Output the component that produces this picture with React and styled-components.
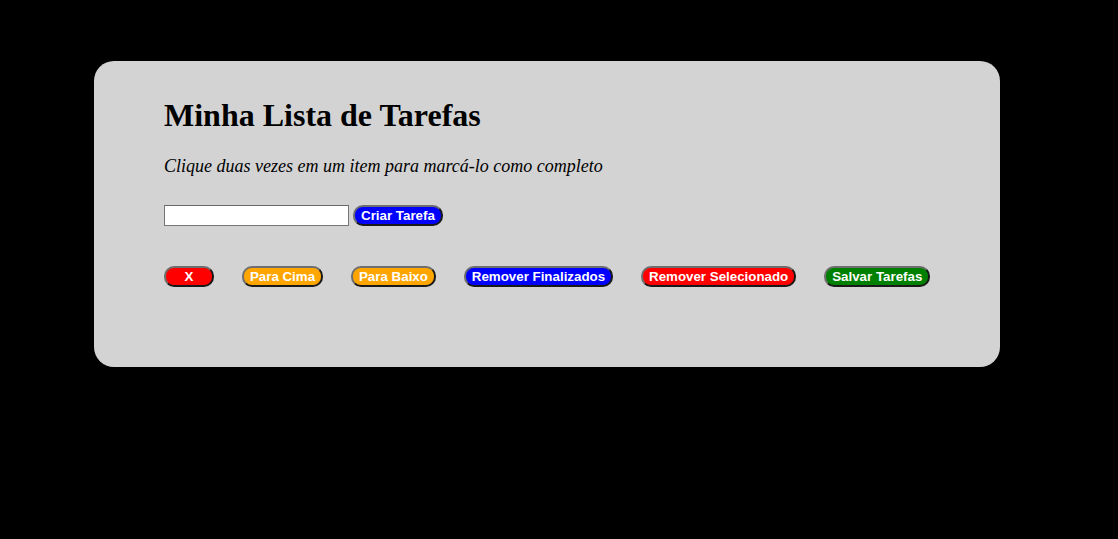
import styled, { createGlobalStyle } from 'styled-components';

const GlobalStyle = createGlobalStyle`
  body {
    margin: 0;
    background-color: black;
    font-family: 'Liberation Serif', 'Times New Roman', serif;
  }
`;

const Card = styled.div`
  box-sizing: border-box;
  width: 906px;
  margin: 61px 0 0 94px;
  padding: 15px 70px 80px;
  background-color: lightgray;
  border-radius: 20px;
  display: flow-root;
`;

const Title = styled.h1`
  font-size: 32px;
  font-weight: bold;
  color: black;
  margin: 21.44px 0;
`;

const Hint = styled.p`
  font-size: 18px;
  font-style: italic;
  color: black;
  margin: 0 0 28px;
`;

const InputRow = styled.div`
  display: flex;
  align-items: center;
  gap: 4px;
`;

const TaskInput = styled.input`
  box-sizing: border-box;
  width: 185px;
  height: 21px;
  border: 1px solid #767676;
  border-top-color: #6a6a6a;
  background: white;
  padding: 1px 2px;
  font-family: 'Liberation Sans', Arial, sans-serif;
  font-size: 13.33px;
`;

const Button = styled.button`
  box-sizing: border-box;
  flex-shrink: 0;
  height: 21px;
  padding: 0 6px;
  min-width: ${(props) => (props.wide ? '50px' : '0')};
  border: 2px outset #6e6e6e;
  border-radius: 10px;
  background-color: ${(props) => props.color};
  color: white;
  font-family: 'Liberation Sans', Arial, sans-serif;
  font-size: 13.33px;
  font-weight: bold;
  line-height: 15px;
  white-space: nowrap;
  cursor: pointer;
`;

const ActionRow = styled.div`
  display: flex;
  align-items: center;
  gap: 27.9px;
  margin-top: 40px;
`;

const actions = [
  { label: 'X', color: 'red', wide: true },
  { label: 'Para Cima', color: 'orange' },
  { label: 'Para Baixo', color: 'orange' },
  { label: 'Remover Finalizados', color: 'blue' },
  { label: 'Remover Selecionado', color: 'red' },
  { label: 'Salvar Tarefas', color: 'green' },
];

export default function App() {
  return (
    <>
      <GlobalStyle />
      <Card>
        <Title>Minha Lista de Tarefas</Title>
        <Hint>Clique duas vezes em um item para marcá-lo como completo</Hint>
        <InputRow>
          <TaskInput type="text" />
          <Button color="blue">Criar Tarefa</Button>
        </InputRow>
        <ActionRow>
          {actions.map((item) => (
            <Button key={item.label} color={item.color} wide={item.wide}>
              {item.label}
            </Button>
          ))}
        </ActionRow>
      </Card>
    </>
  );
}
